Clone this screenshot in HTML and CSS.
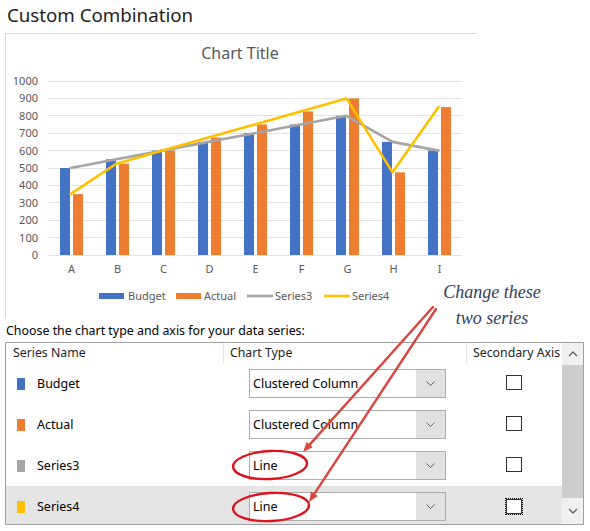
FILE: index.html
```html
<!DOCTYPE html>
<html>
<head>
<meta charset="utf-8">
<link rel="stylesheet" href="styles.css">
</head>
<body>
<div class="page">
  <h1 class="title">Custom Combination</h1>
  <div class="chart-panel">
    <svg class="chart" width="472" height="285" viewBox="5 33 472 285">
      <line class="panel-edge" x1="5.5" y1="33.5" x2="477" y2="33.5"/>
      <line class="panel-edge" x1="5.5" y1="33.5" x2="5.5" y2="318"/>
      <text class="chart-title" x="240" y="59">Chart Title</text>
      <g class="grid">
        <line x1="48" y1="255.5" x2="462" y2="255.5"/>
        <line x1="48" y1="237.5" x2="462" y2="237.5"/>
        <line x1="48" y1="220.5" x2="462" y2="220.5"/>
        <line x1="48" y1="202.5" x2="462" y2="202.5"/>
        <line x1="48" y1="185.5" x2="462" y2="185.5"/>
        <line x1="48" y1="168.5" x2="462" y2="168.5"/>
        <line x1="48" y1="150.5" x2="462" y2="150.5"/>
        <line x1="48" y1="133.5" x2="462" y2="133.5"/>
        <line x1="48" y1="115.5" x2="462" y2="115.5"/>
        <line x1="48" y1="98.5" x2="462" y2="98.5"/>
        <line x1="48" y1="81.5" x2="462" y2="81.5"/>
      </g>
      <g class="ylabels">
        <text x="38" y="259">0</text>
        <text x="38" y="241.6">100</text>
        <text x="38" y="224.2">200</text>
        <text x="38" y="206.8">300</text>
        <text x="38" y="189.4">400</text>
        <text x="38" y="172">500</text>
        <text x="38" y="154.6">600</text>
        <text x="38" y="137.2">700</text>
        <text x="38" y="119.8">800</text>
        <text x="38" y="102.4">900</text>
        <text x="38" y="85">1000</text>
      </g>
      <g class="xlabels">
        <text x="71.5" y="273">A</text>
        <text x="117.5" y="273">B</text>
        <text x="163.5" y="273">C</text>
        <text x="209.5" y="273">D</text>
        <text x="255.5" y="273">E</text>
        <text x="301.5" y="273">F</text>
        <text x="347.5" y="273">G</text>
        <text x="393.5" y="273">H</text>
        <text x="439.5" y="273">I</text>
      </g>
      <g class="bars-budget">
        <rect x="60" y="168" width="10" height="87"/>
        <rect x="106" y="159.3" width="10" height="95.7"/>
        <rect x="152" y="150.6" width="10" height="104.4"/>
        <rect x="198" y="141.9" width="10" height="113.1"/>
        <rect x="244" y="133.2" width="10" height="121.8"/>
        <rect x="290" y="124.5" width="10" height="130.5"/>
        <rect x="336" y="115.8" width="10" height="139.2"/>
        <rect x="382" y="141.9" width="10" height="113.1"/>
        <rect x="428" y="150.6" width="10" height="104.4"/>
      </g>
      <g class="bars-actual">
        <rect x="73" y="194.1" width="10" height="60.9"/>
        <rect x="119" y="163.65" width="10" height="91.35"/>
        <rect x="165" y="150.6" width="10" height="104.4"/>
        <rect x="211" y="137.55" width="10" height="117.45"/>
        <rect x="257" y="124.5" width="10" height="130.5"/>
        <rect x="303" y="111.45" width="10" height="143.55"/>
        <rect x="349" y="98.4" width="10" height="156.6"/>
        <rect x="395" y="172.35" width="10" height="82.65"/>
        <rect x="441" y="107.1" width="10" height="147.9"/>
      </g>
      <polyline class="line-s3" points="70.5,168 116.5,159.3 162.5,150.6 208.5,141.9 254.5,133.2 300.5,124.5 346.5,115.8 392.5,141.9 438.5,150.6"/>
      <polyline class="line-s4" points="70.5,194.1 116.5,163.65 162.5,150.6 208.5,137.55 254.5,124.5 300.5,111.45 346.5,98.4 392.5,172.35 438.5,107.1"/>
      <g class="legend">
        <rect x="99" y="293" width="25" height="6" class="lg-budget"/>
        <text x="128" y="300">Budget</text>
        <rect x="176" y="293" width="25" height="6" class="lg-actual"/>
        <text x="204" y="300">Actual</text>
        <line x1="247" y1="296" x2="273" y2="296" class="lg-s3"/>
        <text x="275" y="300">Series3</text>
        <line x1="324" y1="296" x2="350" y2="296" class="lg-s4"/>
        <text x="352" y="300">Series4</text>
      </g>
    </svg>
  </div>
  <p class="prompt">Choose the chart type and axis for your data series:</p>
  <div class="grid-box">
    <div class="grid-main">
      <div class="hdr">
        <div class="hdr-cell">Series Name</div>
        <div class="hdr-cell">Chart Type</div>
        <div class="hdr-cell">Secondary Axis</div>
      </div>
      <div class="row">
        <div class="name"><span class="swatch sw-budget"></span>Budget</div>
        <div class="type"><div class="select"><span class="select-text">Clustered Column</span><span class="select-btn"><svg width="9" height="5" viewBox="0 0 9 5"><path d="M0.5 0.5 L4.5 4.5 L8.5 0.5" class="chev"/></svg></span></div></div>
        <div class="axis"><span class="check"></span></div>
      </div>
      <div class="row">
        <div class="name"><span class="swatch sw-actual"></span>Actual</div>
        <div class="type"><div class="select"><span class="select-text">Clustered Column</span><span class="select-btn"><svg width="9" height="5" viewBox="0 0 9 5"><path d="M0.5 0.5 L4.5 4.5 L8.5 0.5" class="chev"/></svg></span></div></div>
        <div class="axis"><span class="check"></span></div>
      </div>
      <div class="row">
        <div class="name"><span class="swatch sw-s3"></span>Series3</div>
        <div class="type"><div class="select"><span class="select-text">Line</span><span class="select-btn"><svg width="9" height="5" viewBox="0 0 9 5"><path d="M0.5 0.5 L4.5 4.5 L8.5 0.5" class="chev"/></svg></span></div></div>
        <div class="axis"><span class="check"></span></div>
      </div>
      <div class="row sel">
        <div class="name"><span class="swatch sw-s4"></span>Series4</div>
        <div class="type"><div class="select"><span class="select-text">Line</span><span class="select-btn"><svg width="9" height="5" viewBox="0 0 9 5"><path d="M0.5 0.5 L4.5 4.5 L8.5 0.5" class="chev"/></svg></span></div></div>
        <div class="axis"><span class="check focus"></span></div>
      </div>
    </div>
    <div class="scrollbar">
      <div class="sb-btn"><svg width="10" height="6" viewBox="0 0 10 6"><path d="M1 5 L5 1 L9 5" class="sb-chev"/></svg></div>
      <div class="sb-thumb"></div>
      <div class="sb-btn down"><svg width="10" height="6" viewBox="0 0 10 6"><path d="M1 1 L5 5 L9 1" class="sb-chev"/></svg></div>
    </div>
  </div>
  <svg class="overlay" width="590" height="531" viewBox="0 0 590 531">
    <line class="arrow" x1="433" y1="307" x2="309.7" y2="444.6"/>
    <polygon class="arrow-head" points="303,452 312.7,447.2 306.7,441.9"/>
    <line class="arrow" x1="436" y1="309" x2="314.5" y2="493.7"/>
    <polygon class="arrow-head" points="309,502 317.8,495.9 311.2,491.5"/>
    <ellipse class="ring" cx="270" cy="465" rx="37" ry="14" transform="rotate(-3 270 465)"/>
    <ellipse class="ring" cx="271" cy="507" rx="38" ry="14" transform="rotate(-3 271 507)"/>
  </svg>
  <div class="note">Change these<br>two series</div>
</div>
</body>
</html>
```

FILE: styles.css
```css
* { box-sizing: border-box; }
body {
  margin: 0;
  background: #fff;
  font-family: "Segoe UI", "Noto Sans", "Open Sans", sans-serif;
  color: #000;
}
.page {
  position: relative;
  width: 590px;
  height: 531px;
  overflow: hidden;
}
.title {
  margin: 0;
  padding: 2px 0 0 7px;
  height: 33px;
  font-size: 18.7px;
  font-weight: 400;
  line-height: 26px;
  color: #1e1e1e;
}
.chart-panel {
  margin-left: 5px;
  width: 472px;
  height: 285px;
}
.chart { display: block; }
.chart text {
  font-family: "Segoe UI", "Noto Sans", sans-serif;
  fill: #595959;
}
.panel-edge { stroke: #d9d9d9; stroke-width: 1; }
.chart-title { font-size: 16px; text-anchor: middle; }
.grid line { stroke: #e3e3e3; stroke-width: 1; }
.ylabels text { font-size: 11px; text-anchor: end; }
.xlabels text { font-size: 11px; text-anchor: middle; }
.bars-budget rect { fill: #4472c4; }
.bars-actual rect { fill: #ed7d31; }
.line-s3 { fill: none; stroke: #a5a5a5; stroke-width: 2.6; stroke-linejoin: round; stroke-linecap: round; }
.line-s4 { fill: none; stroke: #ffc000; stroke-width: 2.6; stroke-linejoin: round; stroke-linecap: round; }
.legend text { font-size: 11px; }
.lg-budget { fill: #4472c4; }
.lg-actual { fill: #ed7d31; }
.lg-s3 { stroke: #a5a5a5; stroke-width: 2.6; }
.lg-s4 { stroke: #ffc000; stroke-width: 2.6; }

.prompt {
  margin: 0;
  padding-left: 6px;
  height: 24px;
  line-height: 25px;
  font-size: 12.4px;
  white-space: nowrap;
}
.grid-box {
  margin-left: 5px;
  width: 579px;
  height: 183px;
  border: 1px solid #a0a0a0;
  display: flex;
}
.grid-main {
  width: 556px;
  height: 181px;
  overflow: hidden;
}
.hdr {
  display: grid;
  grid-template-columns: 217px 243px 96px;
  height: 20px;
  font-size: 12.3px;
}
.hdr-cell {
  padding-left: 7px;
  line-height: 20px;
  white-space: nowrap;
  color: #1e1e1e;
}
.hdr-cell + .hdr-cell {
  border-left: 1px solid #e5e5e5;
  padding-left: 6px;
}
.row {
  display: grid;
  grid-template-columns: 217px 243px 96px;
  height: 41px;
}
.row.sel { background: #e5e5e5; }
.name {
  display: flex;
  align-items: center;
  gap: 12px;
  padding-left: 11px;
  font-size: 12.5px;
}
.swatch { width: 8px; height: 12px; }
.sw-budget { background: #4472c4; }
.sw-actual { background: #ed7d31; }
.sw-s3 { background: #a5a5a5; }
.sw-s4 { background: #ffc000; }
.type {
  display: flex;
  align-items: center;
  padding-left: 26px;
}
.select {
  width: 197px;
  height: 29px;
  border: 1px solid #adadad;
  background: #fff;
  display: flex;
}
.select-text {
  flex: 1;
  padding-left: 3px;
  line-height: 27px;
  font-size: 12.5px;
  white-space: nowrap;
}
.select-btn {
  width: 29px;
  background: #e1e1e1;
  display: flex;
  align-items: center;
  justify-content: center;
}
.chev { fill: none; stroke: #606060; stroke-width: 1; }
.axis {
  display: flex;
  align-items: center;
  justify-content: center;
}
.check {
  display: block;
  width: 16px;
  height: 15px;
  border: 1px solid #333;
  background: #fff;
  margin-top: -3px;
}
.check.focus {
  outline: 1px dotted #000;
  outline-offset: 0;
  margin-top: 0;
}
.scrollbar {
  width: 21px;
  height: 181px;
  background: #f0f0f0;
  display: flex;
  flex-direction: column;
}
.sb-btn {
  height: 22px;
  display: flex;
  align-items: center;
  justify-content: center;
}
.sb-btn.down { flex: 1; }
.sb-thumb {
  height: 133px;
  background: #cdcdcd;
}
.sb-chev { fill: none; stroke: #606060; stroke-width: 1.3; }

.overlay {
  position: absolute;
  left: 0;
  top: 0;
  pointer-events: none;
}
.arrow { stroke: #d9463f; stroke-width: 2.4; stroke-linecap: round; }
.arrow-head { fill: #d9463f; }
.ring { fill: none; stroke: #e0121b; stroke-width: 2.4; }
.note {
  position: absolute;
  left: 437px;
  top: 279px;
  width: 110px;
  text-align: center;
  font-family: "Liberation Serif", "DejaVu Serif", serif;
  font-style: italic;
  font-size: 18px;
  line-height: 26px;
  color: #33405e;
}
```
